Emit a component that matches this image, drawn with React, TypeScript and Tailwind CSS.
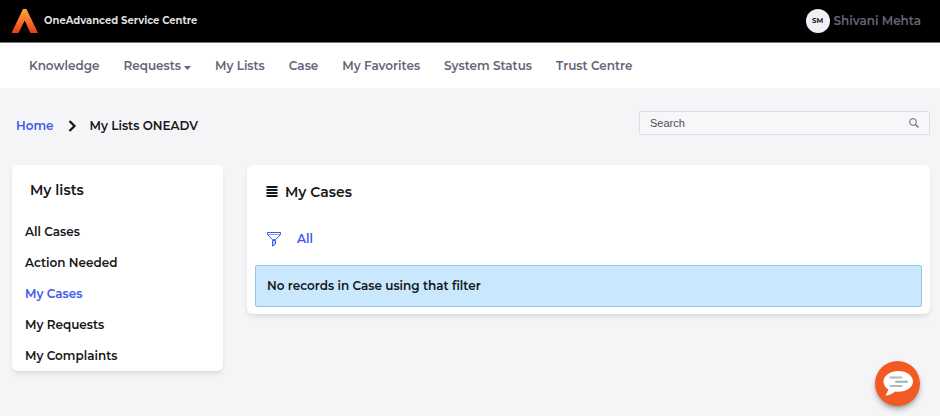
import { useState } from "react"

const navItems = [
  { label: "Knowledge" },
  { label: "Requests", hasMenu: true },
  { label: "My Lists" },
  { label: "Case" },
  { label: "My Favorites" },
  { label: "System Status" },
  { label: "Trust Centre" },
]

const lists = ["All Cases", "Action Needed", "My Cases", "My Requests", "My Complaints"]

const Logo = () => (
  <svg className="h-6 w-7 shrink-0" viewBox="0 0 28 24" aria-hidden="true">
    <defs>
      <linearGradient id="logo" x1="0" y1="0" x2="0" y2="1">
        <stop offset="0" stopColor="#fda63c" />
        <stop offset="0.5" stopColor="#f7732b" />
        <stop offset="1" stopColor="#e93c17" />
      </linearGradient>
    </defs>
    <path d="M12 0h3.500L27 24h-7.600L13.700 11.500 7.600 24H0.500z" fill="url(#logo)" />
  </svg>
)

const FunnelIcon = () => (
  <svg className="h-4 w-4" viewBox="0 0 16 16" fill="none" stroke="currentColor" aria-hidden="true">
    <path d="M1.500 1.500h13v2L9.600 8.600H6.400L1.500 3.500z" />
    <path d="M1.500 3.500h13" strokeOpacity="0.6" />
    <path d="M6.500 9.500h3v3.600l-3 2z" fill="currentColor" fillOpacity="0.3" />
  </svg>
)

const ListIcon = () => (
  <svg className="h-3 w-3" viewBox="0 0 12 12" stroke="currentColor" strokeWidth="2" aria-hidden="true">
    <path d="M0.500 1h11M0.500 4h11M0.500 7h11M0.500 10h11" />
  </svg>
)

const ChatIcon = () => (
  <svg className="h-8 w-8" viewBox="0 0 32 32" aria-hidden="true">
    <path
      d="M16.500 3C8.500 3 1.500 7.400 1.500 13.500c0 3.300 1.900 6.100 4.800 8-.5 2.100-1.500 4.100-3 6 4.100-.4 7.400-1.700 9.900-4.100 1.100.2 2.200.3 3.300.3 8 0 14.500-4.400 14.500-10.200S24.500 3 16.500 3z"
      fill="#fff"
    />
    <path d="M8.500 9.500h11M8.500 18h11" stroke="#b5b5b5" strokeWidth="2" strokeLinecap="round" />
    <path d="M14 13.800h11" stroke="#87b7c4" strokeWidth="2" strokeLinecap="round" />
  </svg>
)

const App = () => {
  const [active, setActive] = useState("My Cases")
  const [query, setQuery] = useState("")

  return (
    <div className="min-h-screen bg-[#f5f5f8] font-['Montserrat','Inter',sans-serif] text-xs leading-5 font-semibold text-[#161719]">
      <header className="flex h-[43px] items-center justify-between border-b border-[#777] bg-black pr-[19px] pl-[11px]">
        <a href="#home" className="flex items-center gap-[5px] text-[10px] font-bold text-[#dedede]">
          <Logo />
          OneAdvanced Service Centre
        </a>
        <button type="button" className="flex items-center gap-1 text-[#65657a]">
          <span className="flex h-6 w-6 items-center justify-center rounded-full bg-[#f1f0f7] text-[7px] font-bold text-[#222]">
            SM
          </span>
          Shivani Mehta
        </button>
      </header>

      <nav className="flex h-[45px] items-center gap-6 bg-white px-[29px] whitespace-nowrap text-[#65657a]">
        {navItems.map((item) => (
          <a key={item.label} href="#nav" className="flex items-center gap-[3px]">
            {item.label}
            {item.hasMenu && (
              <svg className="mt-1 h-1 w-[7px]" viewBox="0 0 7 4" fill="currentColor" aria-hidden="true">
                <path d="M0 0h7L3.500 4z" />
              </svg>
            )}
          </a>
        ))}
      </nav>

      <main className="pt-[23px] pr-[10px] pb-11 pl-3">
        <div className="flex items-start justify-between">
          <nav aria-label="Breadcrumb" className="flex items-center gap-3 pt-[5px] pl-1">
            <a href="#home" className="text-[#3f58ee]">Home</a>
            <svg className="h-3 w-3" viewBox="0 0 12 12" fill="none" stroke="currentColor" strokeWidth="2.2" aria-hidden="true">
              <path d="M3.500 1l5 5-5 5" />
            </svg>
            <span>My Lists ONEADV</span>
          </nav>
          <form
            role="search"
            onSubmit={(e) => e.preventDefault()}
            className="flex h-6 w-[291px] items-center rounded-xs border border-[#dddfe3] bg-[#f7f7f9] px-[10px]"
          >
            <input
              type="text"
              aria-label="Search"
              placeholder="Search"
              value={query}
              onChange={(e) => setQuery(e.target.value)}
              className="min-w-0 flex-1 bg-transparent font-['Liberation_Sans',sans-serif] text-[11px] font-normal outline-none placeholder:text-[#4b4e53]"
            />
            <button type="submit" aria-label="Submit search" className="text-[#666a70]">
              <svg className="h-[10px] w-[10px]" viewBox="0 0 10 10" fill="none" stroke="currentColor" aria-hidden="true">
                <circle cx="4" cy="4" r="3.4" />
                <path d="M6.500 6.500l3 3" strokeWidth="1.2" />
              </svg>
            </button>
          </form>
        </div>

        <div className="mt-[29px] flex items-start gap-6">
          <aside className="w-[211px] shrink-0 rounded-md bg-white pt-[15px] shadow-md shadow-black/8">
            <h2 className="px-[18px] text-sm leading-5">My lists</h2>
            <ul className="mt-4">
              {lists.map((name) => (
                <li key={name}>
                  <button
                    type="button"
                    onClick={() => setActive(name)}
                    className={`block h-[31px] w-full px-[13px] text-left ${active === name ? "text-[#3f58ee]" : ""}`}
                  >
                    {name}
                  </button>
                </li>
              ))}
            </ul>
          </aside>

          <section className="min-w-0 flex-1 rounded-md bg-white px-2 pt-[17px] pb-[7px] shadow-md shadow-black/8">
            <h2 className="flex items-center gap-[7px] px-[11px] text-sm leading-5">
              <ListIcon />
              My Cases
            </h2>
            <div className="mt-[27px] flex items-center gap-[15px] px-[11px] text-[#3f58ee]">
              <button type="button" aria-label="Filter">
                <FunnelIcon />
              </button>
              <a href="#all">All</a>
            </div>
            <p className="mt-4 rounded-xs border border-[#8fc8ea] bg-[#c9e8fd] px-[11px] py-[10px]">
              No records in Case using that filter
            </p>
          </section>
        </div>
      </main>

      <button
        type="button"
        aria-label="Open chat"
        className="fixed right-[20px] bottom-[10px] flex h-[45px] w-[45px] items-center justify-center rounded-full bg-[#f15a22] shadow-md shadow-black/30"
      >
        <ChatIcon />
      </button>
    </div>
  )
}

export default App
